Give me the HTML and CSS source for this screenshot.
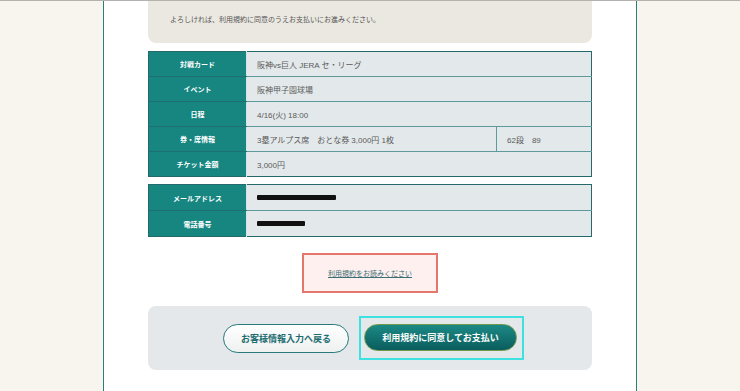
FILE: index.html
```html
<!DOCTYPE html>
<html lang="ja">
<head>
    <meta charset="UTF-8">
    <meta name="viewport" content="width=device-width, initial-scale=1.0">
    <title>購入内容の確認</title>
    <link rel="stylesheet" href="styles.css">
</head>
<body>
<div id="page">
    <div class="lead">
        <p>よろしければ、利用規約に同意のうえお支払いにお進みください。</p>
    </div>

    <table class="info">
        <colgroup>
            <col class="col-head">
            <col>
            <col class="col-seat">
        </colgroup>
        <tr>
            <th>対戦カード</th>
            <td colspan="2">阪神vs巨人 JERA セ・リーグ</td>
        </tr>
        <tr>
            <th>イベント</th>
            <td colspan="2">阪神甲子園球場</td>
        </tr>
        <tr>
            <th>日程</th>
            <td colspan="2">4/16(火) 18:00</td>
        </tr>
        <tr>
            <th>券・席情報</th>
            <td>3塁アルプス席　おとな券 3,000円 1枚</td>
            <td class="seat">62段　89</td>
        </tr>
        <tr>
            <th>チケット金額</th>
            <td colspan="2">3,000円</td>
        </tr>
    </table>

    <table class="info user">
        <colgroup>
            <col class="col-head">
            <col>
        </colgroup>
        <tr>
            <th>メールアドレス</th>
            <td><span class="hidden mail"></span></td>
        </tr>
        <tr>
            <th>電話番号</th>
            <td><span class="hidden tel"></span></td>
        </tr>
    </table>

    <div class="notice">
        <a href="#">利用規約をお読みください</a>
    </div>

    <div class="actions">
        <button type="button" class="btn back">お客様情報入力へ戻る</button>
        <span class="focus">
            <button type="button" class="btn pay">利用規約に同意してお支払い</button>
        </span>
    </div>
</div>
</body>
</html>
```

FILE: styles.css
```css
html,
body {
    margin: 0;
    height: 100%;
}

body {
    background: #f8f5ef;
    border-top: 1px solid #b4b2ae;
    box-sizing: border-box;
    font-family: "Liberation Sans", "Noto Sans CJK JP", sans-serif;
    color: #555;
}

#page {
    width: 444px;
    min-height: 100%;
    margin: 0 auto;
    padding: 0 44px;
    background: #fff;
    border-left: 1px solid #2b7c81;
    border-right: 1px solid #2b7c81;
}

.lead {
    background: #ebe8e1;
    border-radius: 0 0 8px 8px;
    padding: 13px 22px 17px;
}
.lead p {
    margin: 0;
    font-size: 7px;
    line-height: 12px;
    color: #555;
}

.info {
    width: 100%;
    margin-top: 8px;
    border-collapse: collapse;
    border: 1px solid #25696c;
    table-layout: fixed;
}
.col-head {
    width: 98px;
}
.col-seat {
    width: 95px;
}
.info th {
    /* 見出し列 */
    height: 24px;
    padding: 0;
    background: #178681;
    color: #fff;
    font-size: 7px;
    font-weight: bold;
    text-align: center;
    border-bottom: 1px solid #1f6f70;
    border-right: 1px solid #d6e2e3;
}
.info td {
    padding: 0 0 0 10px;
    background: #e3e8ea;
    font-size: 8px;
    color: #5a5a5a;
    border-bottom: 1px solid #5e9a9b;
}
.info tr:last-child th,
.info tr:last-child td {
    border-bottom: 0;
}
.info td.seat {
    border-left: 1px solid #5e9a9b;
}
.info.user {
    margin-top: 7px;
}
.info.user th {
    height: 25px;
}

.hidden {
    display: inline-block;
    height: 5px;
    background: #111;
    border-radius: 1px;
    vertical-align: middle;
}
.hidden.mail {
    width: 79px;
}
.hidden.tel {
    width: 48px;
}

.notice {
    width: 132px;
    height: 36px;
    margin: 16px auto 0;
    display: flex;
    align-items: center;
    justify-content: center;
    background: #fdf0ee;
    border: 2px solid #e3776b;
}
.notice a {
    font-size: 7px;
    color: #3b6d73;
}

.actions {
    display: flex;
    justify-content: center;
    align-items: center;
    gap: 10px;
    height: 64px;
    margin-top: 13px;
    padding-left: 7px;
    background: #e4e8eb;
    border-radius: 8px;
}

.btn {
    font-family: "Noto Sans CJK JP", sans-serif;
    font-weight: bold;
    font-size: 9px;
    border-radius: 15px;
    padding: 0;
    cursor: pointer;
}
.btn.back {
    width: 126px;
    height: 29px;
    color: #1e6e70;
    background: linear-gradient(#ffffff, #eef0f0);
    border: 1.5px solid #27797c;
}
.focus {
    /* フォーカス枠 */
    display: flex;
    padding: 6px 5px 7px 3px;
    border: 2px solid #3fe0e0;
}
.btn.pay {
    width: 153px;
    height: 27px;
    color: #fff;
    background: linear-gradient(#1c8985, #0a5d5d);
    border: 1px solid #6f9a4e;
}
```
